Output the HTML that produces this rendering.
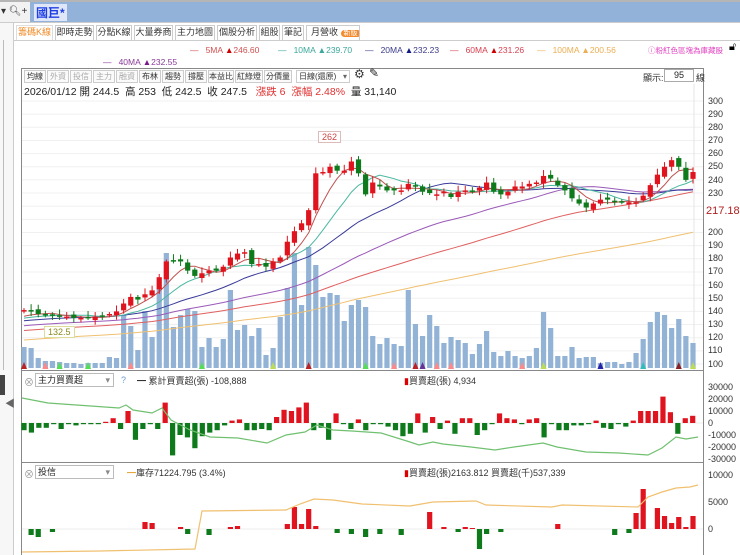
<!DOCTYPE html>
<html><head><meta charset="utf-8">
<style>
*{margin:0;padding:0;box-sizing:border-box}
body{width:740px;height:555px;overflow:hidden;background:#fff;font-family:"Liberation Sans","Noto Sans CJK TC",sans-serif;position:relative;font-size:10px;color:#222}
.abs{position:absolute;white-space:nowrap}
.tab{position:absolute;top:25px;height:15px;border:1px solid #ccc;border-bottom:none;font-size:9px;line-height:13px;text-align:center;color:#333;background:#fff;white-space:nowrap;overflow:hidden}
.btn{position:absolute;top:70px;height:13px;border:1px solid #ccc;font-size:8px;line-height:11px;text-align:center;color:#333;background:#fafafa;white-space:nowrap;overflow:hidden}
.ax{position:absolute;left:708px;font-size:9px;color:#333}
.lg{position:absolute;font-size:8.5px;white-space:nowrap}
</style></head><body>
<!-- top bar -->
<div class="abs" style="left:0;top:0;width:740px;height:2px;background:#b5b5b5"></div>
<div class="abs" style="left:0;top:2px;width:30px;height:20px;background:#f2f2f2"></div>
<div class="abs" style="left:30px;top:2px;width:710px;height:20px;background:#93b2d9"></div>
<div class="abs" style="left:1px;top:6px;font-size:10px;color:#333">▾ 🔍︎+</div>
<div class="abs" style="left:34px;top:4px;font-size:12px;font-weight:bold;color:#1e3fe6;background:#dfe6f7;padding:0 2px">國巨*</div>
<div class="abs" style="left:0;top:22px;width:740px;height:1px;background:#ccc"></div>
<!-- left sidebar -->
<div class="abs" style="left:0;top:23px;width:14px;height:532px;background:#f7f7f7;border-right:1px solid #ccc"></div>
<div class="abs" style="left:0;top:40px;width:4px;height:330px;border-right:1px solid #bbb"></div>
<div class="abs" style="left:0;top:375px;width:5px;height:20px;background:#444"></div>
<div class="abs" style="left:5px;top:395px;font-size:10px;color:#666">◀</div>
<!-- tabs -->
<div class="tab" style="left:16px;width:37px;color:#f08a24;border-color:#ddd">籌碼K線</div>
<div class="tab" style="left:55px;width:39px">即時走勢</div>
<div class="tab" style="left:96px;width:36px">分點K線</div>
<div class="tab" style="left:134px;width:39px">大量券商</div>
<div class="tab" style="left:175px;width:40px">主力地圖</div>
<div class="tab" style="left:217px;width:40px">個股分析</div>
<div class="tab" style="left:259px;width:21px">組股</div>
<div class="tab" style="left:282px;width:22px">筆記</div>
<div class="tab" style="left:306px;width:54px;text-align:left;padding-left:4px">月營收 <span style="background:#f58a2c;color:#fff;border-radius:6px;font-size:7px;padding:0 3px">新版</span></div>
<div class="abs" style="left:14px;top:40px;width:726px;height:1px;background:#ccc"></div>
<!-- legends -->
<div class="lg" style="left:190px;top:45px;color:#d0504f">—&nbsp;&nbsp; 5MA <span style="color:#c00">▲</span>246.60</div>
<div class="lg" style="left:278px;top:45px;color:#3aa89a">—&nbsp;&nbsp; 10MA ▲239.70</div>
<div class="lg" style="left:365px;top:45px;color:#3a3a8a">—&nbsp;&nbsp; 20MA <span style="color:#111a80">▲</span>232.23</div>
<div class="lg" style="left:450px;top:45px;color:#d64050">—&nbsp;&nbsp; 60MA <span style="color:#c00">▲</span>231.26</div>
<div class="lg" style="left:537px;top:45px;color:#ecae52">—&nbsp;&nbsp; 100MA ▲200.56</div>
<div class="abs" style="left:648px;top:45px;font-size:7.5px;color:#e040c0">ⓘ粉紅色區塊為庫藏股</div>
<div class="abs" style="left:729px;top:41px;font-size:11px;color:#000">🔓︎</div>
<div class="lg" style="left:103px;top:57px;color:#8a3a9a">—&nbsp;&nbsp; 40MA <span style="color:#7a1a8a">▲</span>232.55</div>
<!-- main frame -->
<div class="abs" style="left:21px;top:68px;width:683px;height:487px;border:1px solid #888;border-bottom:none"></div>
<div class="btn" style="left:24px;width:22px">均線</div>
<div class="btn" style="left:47px;width:22px;color:#aaa">外資</div>
<div class="btn" style="left:70px;width:22px;color:#aaa">投信</div>
<div class="btn" style="left:93px;width:22px;color:#aaa">主力</div>
<div class="btn" style="left:116px;width:22px;color:#aaa">融資</div>
<div class="btn" style="left:139px;width:22px">布林</div>
<div class="btn" style="left:162px;width:22px">趨勢</div>
<div class="btn" style="left:185px;width:22px">撐壓</div>
<div class="btn" style="left:208px;width:26px">本益比</div>
<div class="btn" style="left:235px;width:28px">紅綠燈</div>
<div class="btn" style="left:264px;width:28px">分價量</div>
<div class="btn" style="left:296px;width:54px;text-align:left;padding-left:2px;background:#fff">日線(還原)<span style="float:right;color:#666;padding-right:2px">▾</span></div>
<div class="abs" style="left:354px;top:67px;font-size:12px;color:#333">⚙</div>
<div class="abs" style="left:369px;top:66px;font-size:12px;color:#222">✎</div>
<div class="abs" style="left:643px;top:71px;font-size:9px;color:#333">顯示:</div>
<div class="abs" style="left:664px;top:69px;width:30px;height:13px;border:1px solid #aaa;font-size:9px;text-align:center;line-height:11px;background:#fff">95</div>
<div class="abs" style="left:696px;top:71px;font-size:9px;color:#333">線</div>
<div class="abs" style="left:24px;top:84px;font-size:10.5px;color:#222">2026/01/12 開 244.5&nbsp; 高 253&nbsp; 低 242.5&nbsp; 收 247.5&nbsp;&nbsp; <span style="color:#e03030">漲跌 6&nbsp; 漲幅 2.48%</span>&nbsp; 量 31,140</div>
<!-- price axis -->
<div class="ax" style="top:96px">300</div><div class="ax" style="top:109px">290</div><div class="ax" style="top:122px">280</div><div class="ax" style="top:135px">270</div><div class="ax" style="top:148px">260</div><div class="ax" style="top:161px">250</div><div class="ax" style="top:175px">240</div><div class="ax" style="top:188px">230</div><div class="ax" style="top:227px">200</div><div class="ax" style="top:240px">190</div><div class="ax" style="top:253px">180</div><div class="ax" style="top:266px">170</div><div class="ax" style="top:280px">160</div><div class="ax" style="top:293px">150</div><div class="ax" style="top:306px">140</div><div class="ax" style="top:319px">130</div><div class="ax" style="top:332px">120</div><div class="ax" style="top:345px">110</div><div class="ax" style="top:359px">100</div>
<div class="abs" style="left:706px;top:205px;font-size:11px;color:#b02020">217.18</div>
<div class="ax" style="top:382px">30000</div><div class="ax" style="top:394px">20000</div><div class="ax" style="top:406px">10000</div><div class="ax" style="top:418px">0</div><div class="ax" style="top:430px">-10000</div><div class="ax" style="top:442px">-20000</div><div class="ax" style="top:454px">-30000</div>
<div class="ax" style="top:470px">10000</div><div class="ax" style="top:497px">5000</div><div class="ax" style="top:524px">0</div>
<svg id="g" class="abs" style="left:0;top:0" width="740" height="555"></svg>
<div class="abs" style="left:318px;top:131px;font-size:9px;color:#c44;border:1px solid #dbb;background:#fff;padding:0 3px">262</div>
<div class="abs" style="left:44px;top:326px;font-size:9px;color:#8a8a20;border:1px solid #dd9;background:#fff;padding:0 3px">132.5</div>
<!-- sub panels -->
<div class="abs" style="left:21px;top:370px;width:683px;height:1px;background:#888"></div>
<div class="abs" style="left:24px;top:374px;font-size:10px;color:#999">⊗</div>
<div class="abs" style="left:35px;top:373px;width:79px;height:14px;border:1px solid #bbb;font-size:9px;padding-left:2px;line-height:12px;background:#fff">主力買賣超<span style="float:right;color:#888;padding-right:3px">▾</span></div>
<div class="abs" style="left:121px;top:375px;font-size:9px;color:#6a9ad0">?</div>
<div class="abs" style="left:137px;top:374px;font-size:9px;color:#333">━ 累計買賣超(張) -108,888</div>
<div class="abs" style="left:404px;top:374px;font-size:9px;color:#333"><span style="color:#d00">▮</span>買賣超(張) 4,934</div>
<div class="abs" style="left:21px;top:462px;width:683px;height:1px;background:#888"></div>
<div class="abs" style="left:24px;top:466px;font-size:10px;color:#999">⊗</div>
<div class="abs" style="left:35px;top:465px;width:79px;height:14px;border:1px solid #bbb;font-size:9px;padding-left:2px;line-height:12px;background:#fff">投信<span style="float:right;color:#888;padding-right:3px">▾</span></div>
<div class="abs" style="left:127px;top:466px;font-size:9px;color:#333"><span style="color:#e8a640">━</span>庫存71224.795 (3.4%)</div>
<div class="abs" style="left:404px;top:466px;font-size:9px;color:#333"><span style="color:#d00">▮</span>買賣超(張)2163.812 買賣超(千)537,339</div>
<script>
var C=[141,140,138,137,137,136,136,135,135,135,136,136,138,140,146,151,149,153,156,166,178,178,178,171,167,169,171,171,174,181,184,185,176,176,174,178,181,193,201,207,217,245,246,250,247,247,254,245,229,238,235,232,232,232,237,235,231,230,229,231,227,231,232,231,234,238,231,229,231,235,235,237,238,243,241,236,232,226,222,219,222,225,225,223,223,223,223,228,236,244,250,255,250,240,246];
var V=[347,348,358,361,361,362,363,363,364,363,363,363,357,358,315,326,350,311,337,288,253,327,315,309,311,347,338,347,339,290,330,325,336,328,355,348,317,288,253,305,247,265,297,293,295,321,305,300,307,336,344,338,344,346,290,324,336,315,326,343,337,340,343,354,344,331,352,356,351,356,358,356,348,312,328,356,356,347,358,357,357,363,362,362,364,362,353,339,322,312,315,328,319,336,343];
var n=C.length,x0=24,dx=(693-24)/(n-1);
function X(i){return x0+i*dx}function Y(p){return 101+(300-p)*1.315}
var s='';
for(var k=0;k<=20;k++){var y=101+k*13.15;s+='<line x1="22" x2="703" y1="'+y+'" y2="'+y+'" stroke="#f0f0f0"/>';}
s+='<line x1="694" x2="694" y1="84" y2="370" stroke="#e4e4e4"/>';
for(var i=0;i<n;i++){var v=V[i]||360;s+='<rect x="'+(X(i)-2.6)+'" y="'+v+'" width="5.2" height="'+(368-v)+'" fill="#93b3d6"/>';}
var tri={0:'#b22',3:'#f88',5:'#5d5',9:'#5d5',15:'#f88',25:'#5d5',35:'#bd5',40:'#b22',48:'#5d5',52:'#f88',55:'#b22',56:'#639',58:'#f88',60:'#f88',70:'#f88',73:'#bd5',81:'#22a',87:'#3bb',92:'#822',94:'#bd5'};
for(var t in tri){var xx=X(+t);s+='<polygon points="'+(xx-3)+',369 '+(xx+3)+',369 '+xx+',362" fill="'+tri[t]+'"/>';}
var H=[];for(var j=0;j<100;j++)H.push(100+j*0.36);var A=H.concat(C);
function ma(p,col){var pts=[];for(var i=0;i<n;i++){var sm=0;for(var k=0;k<p;k++)sm+=A[100+i-k];pts.push(X(i).toFixed(1)+','+Y(sm/p).toFixed(1));}s+='<polyline points="'+pts.join(' ')+'" fill="none" stroke="'+col+'" stroke-width="1"/>';}
ma(100,'#f0c070');ma(60,'#e06060');ma(40,'#9a5ab8');ma(20,'#3a3a9a');ma(10,'#4ab8a0');ma(5,'#c05050');
for(var i=0;i<n;i++){var c=C[i],o=i?C[i-1]+((i*7)%5-2)*0.8:141;if(Math.abs(c-o)<0.6)o=c+((i%2)?1:-1);var up=c>=o;var col=up?'#e0141e':'#0e7a1c';var hi=Math.max(o,c)+1.5+(i*3%4),lo=Math.min(o,c)-1.5-(i*5%3);var x=X(i);
s+='<line x1="'+x+'" x2="'+x+'" y1="'+Y(hi)+'" y2="'+Y(lo)+'" stroke="'+col+'"/>';
var yt=Y(Math.max(o,c)),h=Math.max(1.5,Math.abs(c-o)*1.315);s+='<rect x="'+(x-2.6)+'" y="'+yt+'" width="5.2" height="'+h+'" fill="'+col+'"/>';}
var B=[-0.6,-0.8,-0.4,-0.4,-0.1,-0.5,-0.1,-0.2,-0.1,-0.1,-0.1,0.1,0.4,-0.5,1.0,-1.4,-0.5,-0.1,-0.5,1.7,-2.7,-1,-1.2,-2.1,-1.1,-0.8,-0.6,-0.2,0.2,0.3,-0.6,-0.6,-0.5,-0.6,0.5,1.1,1.0,1.3,1.7,-0.6,-0.4,-1.4,0.8,-0.1,-0.5,0.3,-0.6,-0.1,-0.1,-0.3,-0.6,-1.1,-0.9,0.8,-0.8,0.5,-0.5,0.2,-0.9,0.4,0.4,-1.0,-0.6,-0.1,0.8,0.4,0.3,-0.1,0.3,0.4,-1.2,-0.1,-0.6,-0.6,-0.2,-0.2,-0.1,0.2,-0.4,-0.5,-0.1,-0.3,0.2,1.0,1.0,1.0,2.2,0.9,-0.9,0.4,0.6];
var z1=423,sc=12;
s+='<line x1="22" x2="703" y1="'+z1+'" y2="'+z1+'" stroke="#eee"/>';
for(var i=0;i<B.length;i++){var b=B[i],x=X(i*n/B.length);var h=Math.abs(b)*sc;s+='<rect x="'+(x-2.6)+'" y="'+(b>0?z1-h:z1)+'" width="5.2" height="'+Math.max(h,1)+'" fill="'+(b>0?'#e0141e':'#0e7a1c')+'"/>';}
s+='<polyline fill="none" stroke="#70c070" stroke-width="1.2" points="22,398 48,403 119,408 126,405 133,410 152,413 162,408 171,420 190,430 210,437 238,438 267,443 286,435 305,432 317,425 333,430 352,431 381,433 410,442 419,445 433,442 443,444 471,447 495,450 514,447 543,443 557,447 586,452 619,453 648,455 662,448 676,437 686,439 698,437"/>';
var z2=529;s+='<line x1="22" x2="703" y1="'+z2+'" y2="'+z2+'" stroke="#eee"/>';
var R={17:522,18:523,22:527,29:527,30:526,37:524,38:507,39:524,40:509,41:526,57:512,59:527,62:527,63:528,75:524,86:513,87:489,89:508,90:516,91:523,92:517,93:527,94:516};
var G={1:535,2:537,4:532,23:534,26:535,44:533,46:534,48:537,50:534,53:535,61:532,64:549,65:534,67:532,83:535,85:533};
for(var t in R){s+='<rect x="'+(X(+t)-2.6)+'" y="'+R[t]+'" width="5.2" height="'+(z2-R[t])+'" fill="#e0141e"/>';}
for(var t in G){s+='<rect x="'+(X(+t)-2.6)+'" y="'+z2+'" width="5.2" height="'+(G[t]-z2)+'" fill="#0e7a1c"/>';}
s+='<polyline fill="none" stroke="#f0c070" stroke-width="1.2" points="22,552 100,551 195,549 202,511 286,510 300,504 314,499 333,500 362,504 410,506 433,502 476,501 486,505 552,507 562,505 638,507 648,497 662,492 676,488 690,487 698,485"/>';
document.getElementById('g').innerHTML=s;
</script>
</body></html>
